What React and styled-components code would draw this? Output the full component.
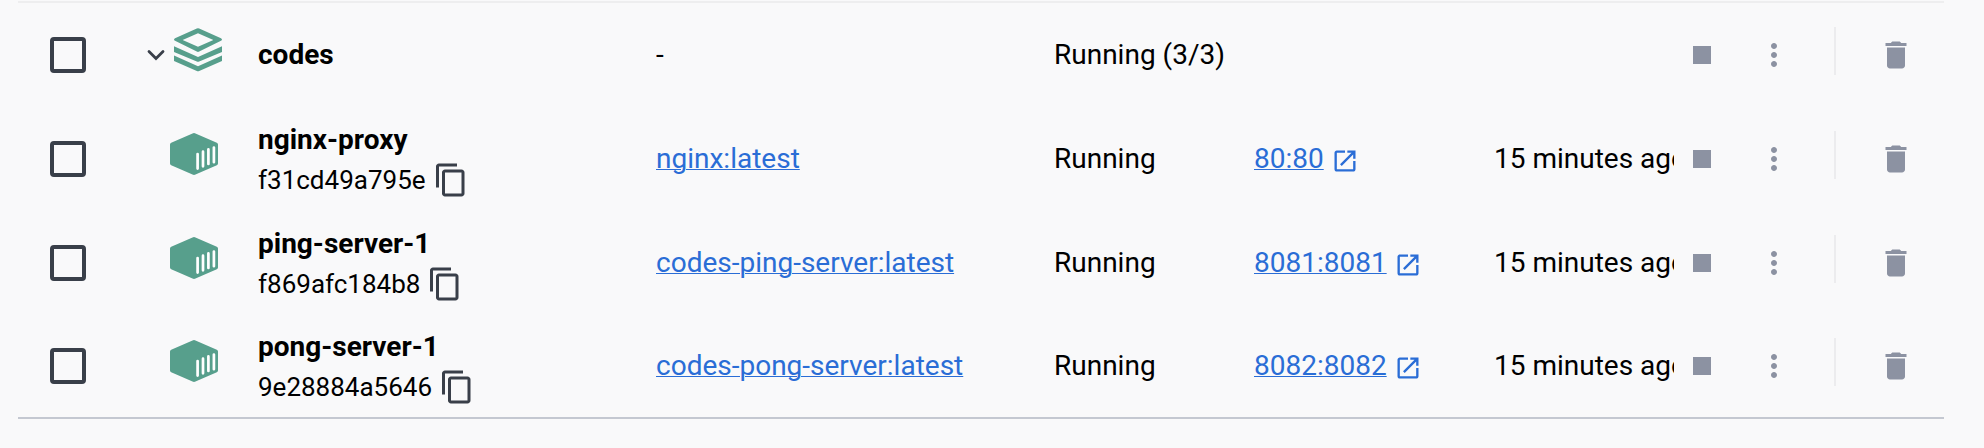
import React from "react";
import styled, { createGlobalStyle } from "styled-components";

const GlobalStyle = createGlobalStyle`
  *, *::before, *::after { box-sizing: border-box; }
  body {
    margin: 0;
    background: #f9f9fa;
    color: #000;
    font-family: Roboto, "Liberation Sans", sans-serif;
    font-size: 28px;
    line-height: 40px;
  }
`;

const Page = styled.main`
  padding: 1px 40px 28px 18px;
`;

const Table = styled.table`
  width: 100%;
  table-layout: fixed;
  border-spacing: 0;
  border-top: 2px solid #eeeeef;
  border-bottom: 2px solid #c4c8d1;
`;

const Col = styled.col`
  width: ${({ $width }) => ($width ? `${$width}px` : "auto")};
`;

const Row = styled.tr`
  height: 104px;

  &:last-child {
    height: 102px;
  }
`;

const Cell = styled.td`
  padding: 0 0 0 ${({ $indent = 0 }) => $indent}px;
  overflow: hidden;
  white-space: nowrap;
  text-align: left;
  vertical-align: middle;
`;

const Checkbox = styled.input`
  display: block;
  appearance: none;
  width: 36px;
  height: 36px;
  margin: 0;
  border: 4px solid #393f49;
  border-radius: 4px;
  cursor: pointer;

  &:checked {
    background: #393f49;
  }
`;

const IconGroup = styled.div`
  display: flex;
  align-items: center;
  gap: 6px;
`;

const PlainButton = styled.button`
  display: inline-flex;
  flex: none;
  padding: 0;
  border: 0;
  background: none;
  color: ${({ $tone }) => ($tone === "dark" ? "#393f49" : "#8c92a2")};
  cursor: pointer;
`;

const StatusIcon = styled.span`
  display: flex;
  padding-bottom: 10px;
  color: #579f8c;
`;

const NameBlock = styled.div`
  padding-top: 2px;
`;

const Name = styled.div`
  font-weight: 700;
`;

const IdLine = styled.div`
  display: flex;
  align-items: center;
  gap: 7px;
  font-size: 26px;
`;

const Link = styled.a`
  color: #2a6dd6;
  text-decoration: underline;
  text-decoration-thickness: 1px;
`;

const PortIcon = styled.svg`
  margin-left: 7px;
  color: #2a6dd6;
  vertical-align: middle;
`;

const Actions = styled.div`
  display: flex;
  align-items: center;
`;

const MenuButton = styled(PlainButton)`
  margin-left: 36px;
`;

const Divider = styled.span`
  width: 2px;
  height: 48px;
  margin: 0 42px 8px;
  background: #ececee;
`;

const Glyph = ({ d, size = 36 }) => (
  <svg width={size} height={size} viewBox="0 0 24 24" fill="currentColor" aria-hidden="true">
    <path d={d} />
  </svg>
);

const paths = {
  stop: "M6 6h12v12H6z",
  more: "M12 8c1.1 0 2-.9 2-2s-.9-2-2-2-2 .9-2 2 .9 2 2 2zm0 2c-1.1 0-2 .9-2 2s.9 2 2 2 2-.9 2-2-.9-2-2-2zm0 6c-1.1 0-2 .9-2 2s.9 2 2 2 2-.9 2-2-.9-2-2-2z",
  trash: "M6 19c0 1.1.9 2 2 2h8c1.1 0 2-.9 2-2V7H6v12zM19 4h-3.5l-1-1h-5l-1 1H5v2h14V4z",
  copy: "M16 1H4c-1.1 0-2 .9-2 2v14h2V3h12V1zm3 4H8c-1.1 0-2 .9-2 2v14c0 1.1.9 2 2 2h11c1.1 0 2-.9 2-2V7c0-1.1-.9-2-2-2zm0 16H8V7h11v14z",
  open: "M19 19H5V5h7V3H5c-1.11 0-2 .9-2 2v14c0 1.1.89 2 2 2h14c1.1 0 2-.9 2-2v-7h-2v7zM14 3v2h3.59l-9.83 9.83 1.41 1.41L19 6.41V10h2V3h-7z",
};

const StackIcon = () => (
  <svg width="48" height="44" viewBox="0 0 48 44" fill="currentColor" role="img" aria-label="Compose stack">
    <path
      fillRule="evenodd"
      d="M22.8.6q1.200-.5 2.400 0L47 10.200q2 1.300 0 2.600L25.200 23.600q-1.200.6-2.400 0L1 12.800q-2-1.300 0-2.600zM24 5.300 8.600 11.900 24 18.800 39.400 11.900z"
    />
    <path d="M0 18.300 24 29 48 18.300v5.600L25.200 33.500q-1.200.5-2.400 0L0 23.900z" />
    <path d="M0 27.400 24 38.200 48 27.400v5.600L25.200 43.100q-1.200.5-2.400 0L0 33z" />
  </svg>
);

const ContainerIcon = () => (
  <svg width="48" height="42" viewBox="0 0 48 42" role="img" aria-label="Container">
    <path
      fill="currentColor"
      d="M22.500.4q1.500-.7 3 0L46.800 9.800q1.200.6 1.200 1.800v18.800q0 1.200-1.200 1.800L25.500 41.600q-1.500.7-3 0L1.200 32.200Q0 31.600 0 30.400V11.600q0-1.200 1.200-1.800z"
    />
    <path
      stroke="#fff"
      strokeWidth="2.700"
      strokeLinecap="round"
      d="M27.600 21v14.600M33 18.700v14.600M38.400 16.400V31M43.900 14.500v14.700"
    />
  </svg>
);

const ChevronIcon = () => (
  <svg width="24" height="24" viewBox="0 0 24 24" fill="none" aria-hidden="true">
    <path
      d="M5 8.500l7 7 7-7"
      stroke="currentColor"
      strokeWidth="2.800"
      strokeLinecap="round"
    />
  </svg>
);

const containers = [
  { name: "nginx-proxy", id: "f31cd49a795e", image: "nginx:latest", port: "80:80" },
  { name: "ping-server-1", id: "f869afc184b8", image: "codes-ping-server:latest", port: "8081:8081" },
  { name: "pong-server-1", id: "9e28884a5646", image: "codes-pong-server:latest", port: "8082:8082" },
];

const SelectCell = ({ name }) => (
  <Cell $indent={32}>
    <Checkbox type="checkbox" aria-label={`Select ${name}`} />
  </Cell>
);

const ActionCell = ({ name }) => (
  <Cell $indent={10}>
    <Actions>
      <PlainButton type="button" aria-label={`Stop ${name}`}>
        <Glyph d={paths.stop} />
      </PlainButton>
      <MenuButton type="button" aria-label={`More actions for ${name}`}>
        <Glyph d={paths.more} />
      </MenuButton>
      <Divider />
      <PlainButton type="button" aria-label={`Delete ${name}`}>
        <Glyph d={paths.trash} />
      </PlainButton>
    </Actions>
  </Cell>
);

const GroupRow = () => (
  <Row>
    <SelectCell name="codes" />
    <Cell $indent={14}>
      <IconGroup>
        <PlainButton type="button" $tone="dark" aria-label="Collapse codes" aria-expanded="true">
          <ChevronIcon />
        </PlainButton>
        <StatusIcon>
          <StackIcon />
        </StatusIcon>
      </IconGroup>
    </Cell>
    <Cell>
      <Name>codes</Name>
    </Cell>
    <Cell>-</Cell>
    <Cell>Running (3/3)</Cell>
    <Cell />
    <Cell />
    <ActionCell name="codes" />
  </Row>
);

const ContainerRow = ({ name, id, image, port }) => (
  <Row>
    <SelectCell name={name} />
    <Cell $indent={40}>
      <StatusIcon>
        <ContainerIcon />
      </StatusIcon>
    </Cell>
    <Cell>
      <NameBlock>
        <Name>{name}</Name>
        <IdLine>
          {id}
          <PlainButton type="button" $tone="dark" aria-label={`Copy ID of ${name}`}>
            <Glyph d={paths.copy} />
          </PlainButton>
        </IdLine>
      </NameBlock>
    </Cell>
    <Cell>
      <Link href="#image">{image}</Link>
    </Cell>
    <Cell>Running</Cell>
    <Cell>
      <Link href="#port">{port}</Link>
      <PortIcon width="28" height="28" viewBox="0 0 24 24" fill="currentColor" aria-hidden="true">
        <path d={paths.open} />
      </PortIcon>
    </Cell>
    <Cell>15 minutes ago</Cell>
    <ActionCell name={name} />
  </Row>
);

export default function App() {
  return (
    <>
      <GlobalStyle />
      <Page>
        <Table aria-label="Containers">
          <colgroup>
            <Col $width={112} />
            <Col $width={128} />
            <Col />
            <Col />
            <Col $width={200} />
            <Col $width={240} />
            <Col $width={180} />
            <Col $width={270} />
          </colgroup>
          <tbody>
            <GroupRow />
            {containers.map((container) => (
              <ContainerRow key={container.id} {...container} />
            ))}
          </tbody>
        </Table>
      </Page>
    </>
  );
}
